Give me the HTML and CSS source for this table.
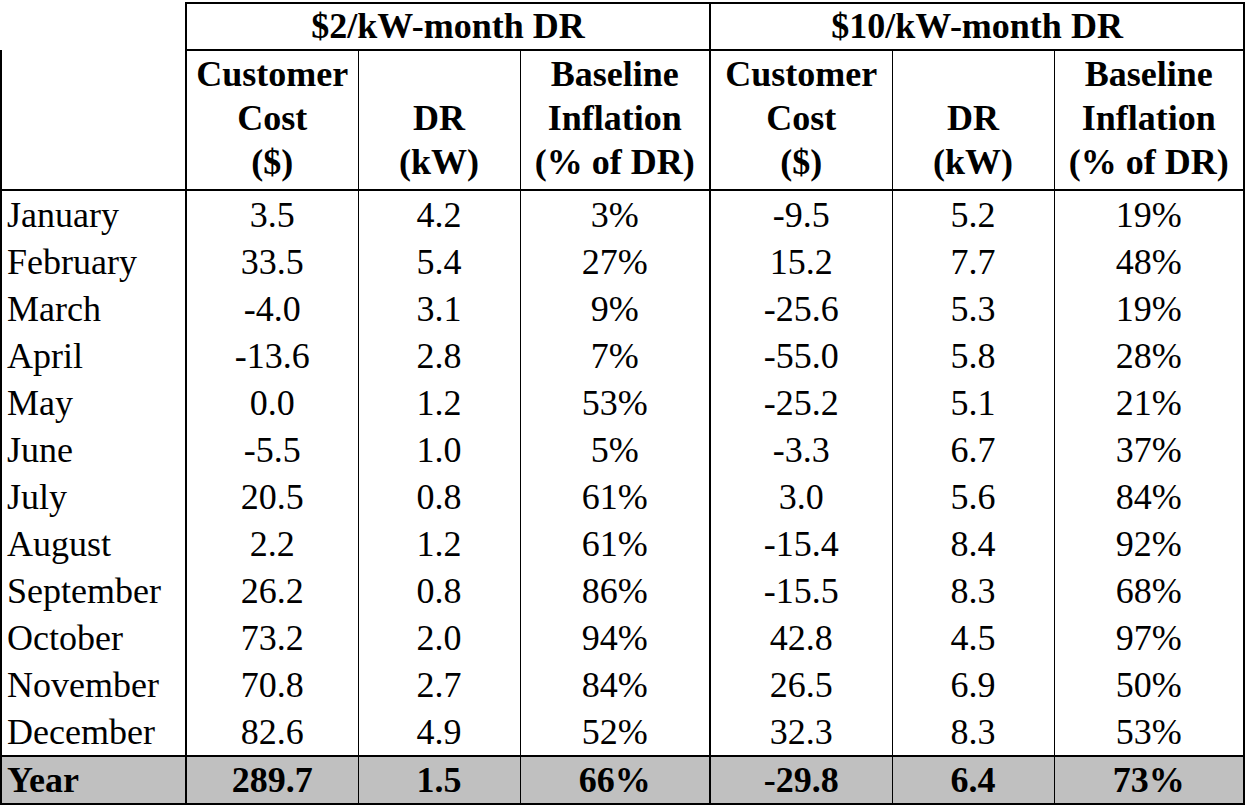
FILE: index.html
```html
<!DOCTYPE html>
<html lang="en">
<head>
<meta charset="utf-8">
<title>Demand response results</title>
<link rel="stylesheet" href="styles.css">
</head>
<body>
<table class="dr-table">
  <colgroup>
    <col class="c-month">
    <col class="c-cost">
    <col class="c-dr">
    <col class="c-base">
    <col class="c-cost2">
    <col class="c-dr">
    <col class="c-base2">
  </colgroup>
  <thead>
    <tr class="group-row">
      <th class="blank"></th>
      <th class="group" colspan="3">$2/kW-month DR</th>
      <th class="group" colspan="3">$10/kW-month DR</th>
    </tr>
    <tr class="sub-row">
      <th class="month-cell"></th>
      <th class="g-start">Customer<br>Cost<br>($)</th>
      <th>DR<br>(kW)</th>
      <th>Baseline<br>Inflation<br>(% of DR)</th>
      <th class="g-start">Customer<br>Cost<br>($)</th>
      <th>DR<br>(kW)</th>
      <th class="g-end">Baseline<br>Inflation<br>(% of DR)</th>
    </tr>
  </thead>
  <tbody>
    <tr><td class="month-cell">January</td><td class="g-start">3.5</td><td>4.2</td><td>3%</td><td class="g-start">-9.5</td><td>5.2</td><td class="g-end">19%</td></tr>
    <tr><td class="month-cell">February</td><td class="g-start">33.5</td><td>5.4</td><td>27%</td><td class="g-start">15.2</td><td>7.7</td><td class="g-end">48%</td></tr>
    <tr><td class="month-cell">March</td><td class="g-start">-4.0</td><td>3.1</td><td>9%</td><td class="g-start">-25.6</td><td>5.3</td><td class="g-end">19%</td></tr>
    <tr><td class="month-cell">April</td><td class="g-start">-13.6</td><td>2.8</td><td>7%</td><td class="g-start">-55.0</td><td>5.8</td><td class="g-end">28%</td></tr>
    <tr><td class="month-cell">May</td><td class="g-start">0.0</td><td>1.2</td><td>53%</td><td class="g-start">-25.2</td><td>5.1</td><td class="g-end">21%</td></tr>
    <tr><td class="month-cell">June</td><td class="g-start">-5.5</td><td>1.0</td><td>5%</td><td class="g-start">-3.3</td><td>6.7</td><td class="g-end">37%</td></tr>
    <tr><td class="month-cell">July</td><td class="g-start">20.5</td><td>0.8</td><td>61%</td><td class="g-start">3.0</td><td>5.6</td><td class="g-end">84%</td></tr>
    <tr><td class="month-cell">August</td><td class="g-start">2.2</td><td>1.2</td><td>61%</td><td class="g-start">-15.4</td><td>8.4</td><td class="g-end">92%</td></tr>
    <tr><td class="month-cell">September</td><td class="g-start">26.2</td><td>0.8</td><td>86%</td><td class="g-start">-15.5</td><td>8.3</td><td class="g-end">68%</td></tr>
    <tr><td class="month-cell">October</td><td class="g-start">73.2</td><td>2.0</td><td>94%</td><td class="g-start">42.8</td><td>4.5</td><td class="g-end">97%</td></tr>
    <tr><td class="month-cell">November</td><td class="g-start">70.8</td><td>2.7</td><td>84%</td><td class="g-start">26.5</td><td>6.9</td><td class="g-end">50%</td></tr>
    <tr><td class="month-cell">December</td><td class="g-start">82.6</td><td>4.9</td><td>52%</td><td class="g-start">32.3</td><td>8.3</td><td class="g-end">53%</td></tr>
  </tbody>
  <tfoot>
    <tr class="year-row"><th class="month-cell">Year</th><td class="g-start">289.7</td><td>1.5</td><td>66%</td><td class="g-start">-29.8</td><td>6.4</td><td class="g-end">73%</td></tr>
  </tfoot>
</table>
</body>
</html>
```
FILE: styles.css
```css
html, body {
  margin: 0;
  padding: 0;
  background: #ffffff;
}

body {
  padding-top: 2px;
}

.dr-table {
  border-collapse: collapse;
  table-layout: fixed;
  width: 1245px;
  font-family: "Liberation Serif", "Times New Roman", serif;
  font-size: 36px;
  color: #000;
}

.c-month { width: 185px; }
.c-cost { width: 172px; }
.c-dr { width: 162px; }
.c-base { width: 190px; }
.c-cost2 { width: 182px; }
.c-base2 { width: 190px; }

.dr-table th,
.dr-table td {
  padding: 0;
  text-align: center;
  line-height: 47px;
  border-left: 1px solid #000;
  white-space: nowrap;
}

.dr-table tbody td {
  padding-top: 2px;
  line-height: 45px;
}

.dr-table th {
  font-weight: bold;
}

.dr-table .month-cell {
  text-align: left;
  padding-left: 5px;
  border-left: 2px solid #000;
  font-weight: normal;
}

.dr-table .g-start {
  border-left: 2px solid #000;
}

.dr-table .g-end {
  border-right: 2px solid #000;
}

.group-row th {
  line-height: 45px;
}

.group-row .blank {
  border: none;
}

.group-row .group {
  border: 2px solid #000;
}

.sub-row th {
  vertical-align: bottom;
  line-height: 44px;
  padding-top: 1px;
  padding-bottom: 5px;
  border-bottom: 2px solid #000;
}

.year-row th,
.year-row td {
  background: #c0c0c0;
  font-weight: bold;
  line-height: 46px;
  border-top: 2px solid #000;
  border-bottom: 2px solid #000;
}

.year-row .month-cell {
  font-weight: bold;
}
```
